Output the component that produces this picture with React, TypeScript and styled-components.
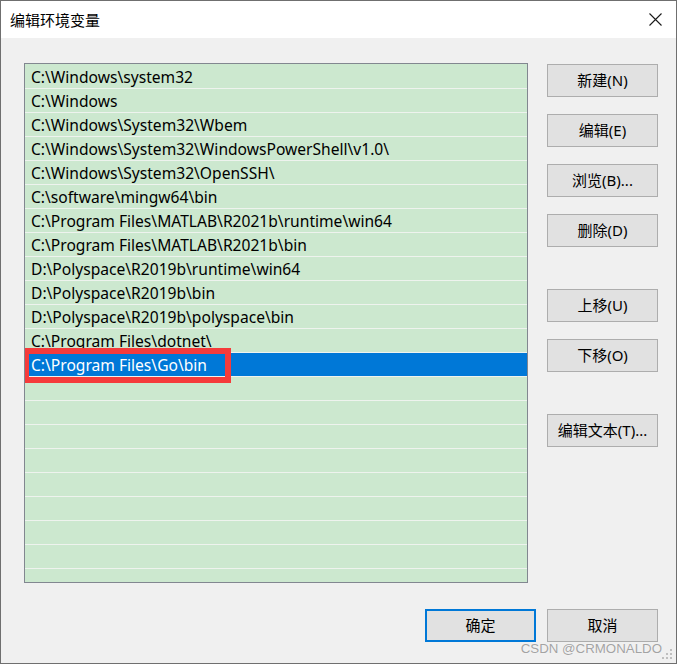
import React from "react";
import styled, { createGlobalStyle } from "styled-components";

const GlobalStyle = createGlobalStyle`
  html, body { margin: 0; padding: 0; background: #ffffff; }
  * { box-sizing: border-box; }
`;

const FONT = `"Noto Sans", "Noto Sans CJK SC", sans-serif`;

const Window = styled.div`
  position: relative;
  width: 677px;
  height: 664px;
  border: 1px solid #6f6f6f;
  display: flex;
  flex-direction: column;
  font-family: ${FONT};
  color: #000;
  overflow: hidden;
`;

const TitleBar = styled.div`
  height: 37px;
  flex: none;
  background: #ffffff;
  display: flex;
  align-items: center;
  justify-content: space-between;
  padding: 0 14px 0 9px;
`;

const Title = styled.div`
  font-size: 15px;
  line-height: 20px;
`;

const CloseButton = styled.div`
  width: 14px;
  height: 14px;
  display: flex;
  align-items: center;
  justify-content: center;
`;

const Body = styled.div`
  flex: 1;
  background: #f0f0f0;
  padding: 25px 18px 21px 23px;
  display: flex;
  flex-direction: column;
`;

const Main = styled.div`
  display: flex;
  gap: 19px;
`;

const ListBox = styled.div`
  position: relative;
  width: 504px;
  height: 520px;
  border: 1px solid #828790;
  background: #cce8cf;
  padding-top: 1px;
  overflow: hidden;
`;

const Row = styled.div<{ $selected?: boolean }>`
  height: 24px;
  border-bottom: 1px solid #eef3ee;
  padding-left: 6px;
  font-size: 15.6px;
  line-height: 24px;
  white-space: nowrap;
  background: ${(p) => (p.$selected ? "#0078d7" : "transparent")};
  color: ${(p) => (p.$selected ? "#ffffff" : "#000000")};
`;

const Highlight = styled.div`
  position: absolute;
  left: -2px;
  top: 284px;
  width: 208px;
  height: 35px;
  border: 6px solid #f53b3b;
  pointer-events: none;
`;

const SideColumn = styled.div`
  display: flex;
  flex-direction: column;
  padding-top: 1px;
`;

const Button = styled.div<{ $gap?: number; $default?: boolean }>`
  width: 111px;
  height: 33px;
  margin-top: ${(p) => p.$gap ?? 0}px;
  background: #e1e1e1;
  border: ${(p) => (p.$default ? "2px solid #0078d7" : "1px solid #adadad")};
  display: flex;
  align-items: center;
  justify-content: center;
  font-size: 15px;
  line-height: 20px;
  padding-bottom: 2px;
  white-space: nowrap;
`;

const Footer = styled.div`
  display: flex;
  justify-content: flex-end;
  gap: 11px;
  margin-top: 26px;
`;

const Watermark = styled.div`
  position: absolute;
  right: 14px;
  bottom: 6px;
  font-family: "Liberation Sans", Arial, sans-serif;
  font-size: 13.3px;
  line-height: 16px;
  color: #a3a3a3;
  text-shadow: 0 0 1px #ffffff;
  white-space: nowrap;
`;

const Grip = styled.svg`
  position: absolute;
  right: 2px;
  bottom: 2px;
`;

const paths = [
  "C:\\Windows\\system32",
  "C:\\Windows",
  "C:\\Windows\\System32\\Wbem",
  "C:\\Windows\\System32\\WindowsPowerShell\\v1.0\\",
  "C:\\Windows\\System32\\OpenSSH\\",
  "C:\\software\\mingw64\\bin",
  "C:\\Program Files\\MATLAB\\R2021b\\runtime\\win64",
  "C:\\Program Files\\MATLAB\\R2021b\\bin",
  "D:\\Polyspace\\R2019b\\runtime\\win64",
  "D:\\Polyspace\\R2019b\\bin",
  "D:\\Polyspace\\R2019b\\polyspace\\bin",
  "C:\\Program Files\\dotnet\\",
  "C:\\Program Files\\Go\\bin",
];

const rows = [...paths, ...Array(9).fill("")];

const sideButtons: { label: string; gap: number }[] = [
  { label: "新建(N)", gap: 0 },
  { label: "编辑(E)", gap: 17 },
  { label: "浏览(B)...", gap: 17 },
  { label: "删除(D)", gap: 17 },
  { label: "上移(U)", gap: 42 },
  { label: "下移(O)", gap: 17 },
  { label: "编辑文本(T)...", gap: 42 },
];

export default function App() {
  return (
    <>
      <GlobalStyle />
      <Window>
        <TitleBar>
          <Title>编辑环境变量</Title>
          <CloseButton>
            <svg width="13" height="13" viewBox="0 0 13 13">
              <path d="M0.5 0.5 L12.5 12.5 M12.5 0.5 L0.5 12.5" stroke="#1a1a1a" strokeWidth="1.1" fill="none" />
            </svg>
          </CloseButton>
        </TitleBar>
        <Body>
          <Main>
            <ListBox>
              {rows.map((r, i) => (
                <Row key={i} $selected={i === 12}>
                  {r}
                </Row>
              ))}
              <Highlight />
            </ListBox>
            <SideColumn>
              {sideButtons.map((b) => (
                <Button key={b.label} $gap={b.gap}>
                  {b.label}
                </Button>
              ))}
            </SideColumn>
          </Main>
          <Footer>
            <Button $default>确定</Button>
            <Button>取消</Button>
          </Footer>
        </Body>
        <Watermark>CSDN @CRMONALDO</Watermark>
        <Grip width="12" height="12" viewBox="0 0 12 12">
          <g fill="#bfbfbf">
            <rect x="8" y="0" width="2" height="2" />
            <rect x="4" y="4" width="2" height="2" />
            <rect x="8" y="4" width="2" height="2" />
            <rect x="0" y="8" width="2" height="2" />
            <rect x="4" y="8" width="2" height="2" />
            <rect x="8" y="8" width="2" height="2" />
          </g>
        </Grip>
      </Window>
    </>
  );
}
